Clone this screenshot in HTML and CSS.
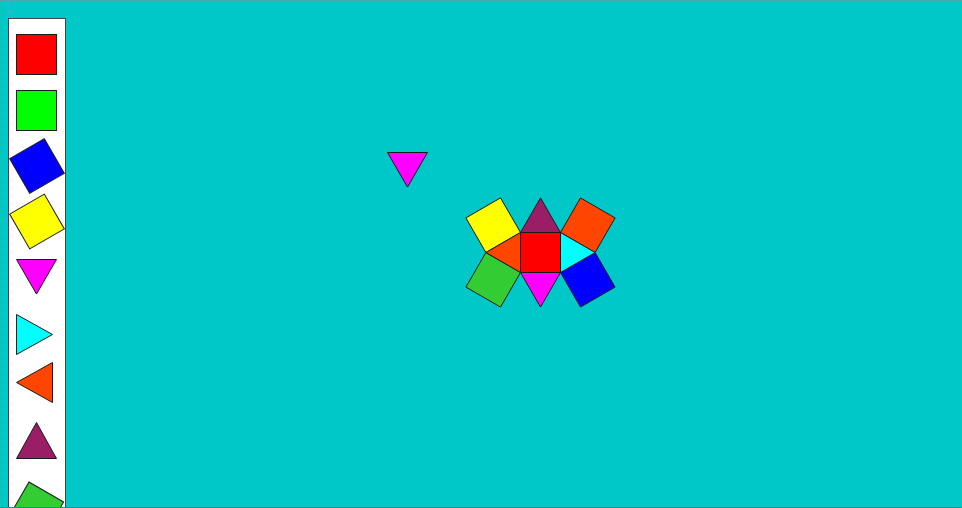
FILE: index.html
```html
<!DOCTYPE html>
<html>
<head>
<meta charset="utf-8">
<title>Shape board</title>
<link rel="stylesheet" href="styles.css">
</head>
<body>
<div class="stage">
  <aside class="palette">
    <svg class="palette-shapes" width="56" height="500" viewBox="0 0 56 500">
      <g class="shape">
        <rect x="7.5" y="15.5" width="40" height="40" fill="#ff0000"/>
        <rect x="7.5" y="71.5" width="40" height="40" fill="#00ff00"/>
        <rect x="-20" y="-20" width="40" height="40" fill="#0000ff" transform="translate(28 147) rotate(60)"/>
        <rect x="-20" y="-20" width="40" height="40" fill="#ffff00" transform="translate(28 202.5) rotate(60)"/>
        <polygon points="7.5,240.5 47.5,240.5 27.5,275.1" fill="#ff00ff"/>
        <polygon points="7.5,295.5 7.5,335.5 43.5,315.5" fill="#00ffff"/>
        <polygon points="43.5,343.5 43.5,383.5 7.5,363.5" fill="#ff4500"/>
        <polygon points="27.5,403.5 7.5,439.5 47.5,439.5" fill="#991e66"/>
        <rect x="-20" y="-20" width="40" height="40" fill="#33cc33" transform="translate(27.3 490.3) rotate(30)"/>
      </g>
    </svg>
  </aside>
  <svg class="canvas" width="960" height="506" viewBox="1 1 960 506">
    <g class="shape">
      <polygon points="387.5,152.5 427.5,152.5 407.5,187.1" fill="#ff00ff"/>

      <polygon points="485.9,252.5 520.5,232.5 500.5,197.9 465.9,217.9" fill="#ffff00"/>
      <polygon points="485.9,252.5 520.5,272.5 500.5,307.1 465.9,287.1" fill="#33cc33"/>
      <polygon points="560.5,232.5 595.1,252.5 615.1,217.9 580.5,197.9" fill="#ff4500"/>
      <polygon points="595.1,252.5 560.5,272.5 580.5,307.1 615.1,287.1" fill="#0000ff"/>

      <polygon points="520.5,232.5 560.5,232.5 540.5,197.9" fill="#991e66"/>
      <polygon points="520.5,272.5 560.5,272.5 540.5,307.1" fill="#ff00ff"/>
      <polygon points="520.5,232.5 520.5,272.5 485.9,252.5" fill="#ff4500"/>
      <polygon points="560.5,232.5 560.5,272.5 595.1,252.5" fill="#00ffff"/>

      <rect x="520.5" y="232.5" width="40" height="40" fill="#ff0000"/>
    </g>
  </svg>
</div>
</body>
</html>
```

FILE: styles.css
```css
html, body {
  margin: 0;
  padding: 0;
  overflow: hidden;
  background: #00c8c8;
}

.stage {
  position: relative;
  box-sizing: border-box;
  width: 962px;
  height: 508px;
  background: #00c8c8;
  border-top: 1px dotted #8c8c8c;
  border-left: 1px dotted #8c8c8c;
  border-right: 1px dotted #8c8c8c;
  border-bottom: 1px solid #009a9a;
  padding: 17px 0 0 7px;
  display: flex;
  align-items: stretch;
  overflow: hidden;
}

.palette {
  box-sizing: border-box;
  width: 58px;
  margin-bottom: -20px;
  background: #ffffff;
  border: 1px solid #444444;
  position: relative;
  z-index: 1;
}

.palette-shapes {
  display: block;
  overflow: hidden;
}

.shape > * {
  stroke: #1a1a1a;
  stroke-width: 1;
}

.canvas {
  position: absolute;
  top: 0;
  left: 0;
  display: block;
}
```
